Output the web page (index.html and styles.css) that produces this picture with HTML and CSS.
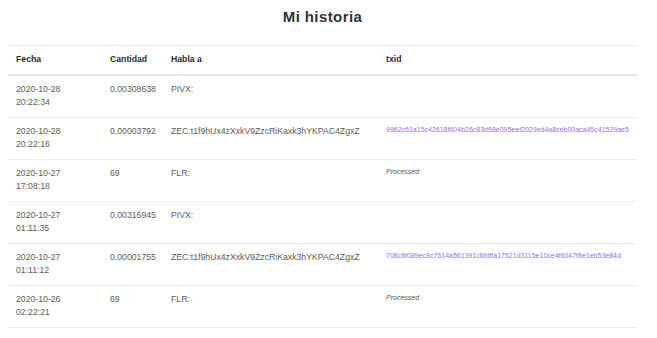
FILE: index.html
```html
<!DOCTYPE html>
<html lang="es">
<head>
<meta charset="utf-8">
<title>Mi historia</title>
<link rel="stylesheet" href="styles.css">
</head>
<body>
<div class="page">
  <h3 class="title">Mi historia</h3>
  <table class="history">
    <thead>
      <tr>
        <th class="c-date">Fecha</th>
        <th class="c-amt">Cantidad</th>
        <th class="c-to">Habla a</th>
        <th class="c-tx">txid</th>
      </tr>
    </thead>
    <tbody>
      <tr>
        <td>2020-10-28<br>20:22:34</td>
        <td>0.00308638</td>
        <td>PIVX:</td>
        <td class="tx"></td>
      </tr>
      <tr>
        <td>2020-10-28<br>20:22:16</td>
        <td>0.00003792</td>
        <td>ZEC:t1f9hUx4zXxkV9ZzcRiKaxk3hYKPAC4ZgxZ</td>
        <td class="tx"><a class="txid" href="#">9962c61a15c42618f604b26c83d68e095eef2029ed4a8ceb00aca45c41529ae5</a></td>
      </tr>
      <tr>
        <td>2020-10-27<br>17:08:18</td>
        <td>69</td>
        <td>FLR:</td>
        <td class="tx"><em class="status">Processed</em></td>
      </tr>
      <tr>
        <td>2020-10-27<br>01:11:35</td>
        <td>0.00316945</td>
        <td>PIVX:</td>
        <td class="tx"></td>
      </tr>
      <tr>
        <td>2020-10-27<br>01:11:12</td>
        <td>0.00001755</td>
        <td>ZEC:t1f9hUx4zXxkV9ZzcRiKaxk3hYKPAC4ZgxZ</td>
        <td class="tx"><a class="txid" href="#">708c8f089ec8c7614a561391c6fdffa17521d3115e10ce4f6047f8e1eb53e84d</a></td>
      </tr>
      <tr>
        <td>2020-10-26<br>02:22:21</td>
        <td>69</td>
        <td>FLR:</td>
        <td class="tx"><em class="status">Processed</em></td>
      </tr>
      <tr>
        <td>2020-10-26<br>02:10:48</td>
        <td>0.00316408</td>
        <td>PIVX:</td>
        <td class="tx"></td>
      </tr>
    </tbody>
  </table>
</div>
</body>
</html>
```
FILE: styles.css
```css
html, body {
  margin: 0;
  padding: 0;
  background: #fff;
}

body {
  font-family: "Liberation Sans", Arial, sans-serif;
  color: #5c5c5c;
}

.page {
  width: 629px;
  margin-left: 8px;
  padding-top: 8px;
}

.title {
  margin: 0 0 19px;
  font-size: 15px;
  line-height: 18px;
  font-weight: bold;
  letter-spacing: 0.4px;
  text-align: center;
  color: #333;
}

.history {
  width: 629px;
  border-collapse: collapse;
  font-size: 8.7px;
  line-height: 13.5px;
  table-layout: fixed;
}

.history th,
.history td {
  padding: 7px 8px;
  text-align: left;
  vertical-align: top;
  border-top: 1px solid #ececec;
}

.history th {
  font-weight: bold;
  color: #2b2b2b;
  border-bottom: 2px solid #e6e6e6;
}

.c-date { width: 78px; }
.c-amt { width: 45px; }
.c-to { width: 199px; }
.c-tx { width: auto; }

.history td {
  white-space: nowrap;
}

.history td.tx {
  font-size: 7px;
  line-height: 10.5px;
  padding-top: 7px;
}

.txid {
  color: #9b6ded;
  text-decoration: none;
}

.status {
  color: #555;
  font-style: italic;
}
```
